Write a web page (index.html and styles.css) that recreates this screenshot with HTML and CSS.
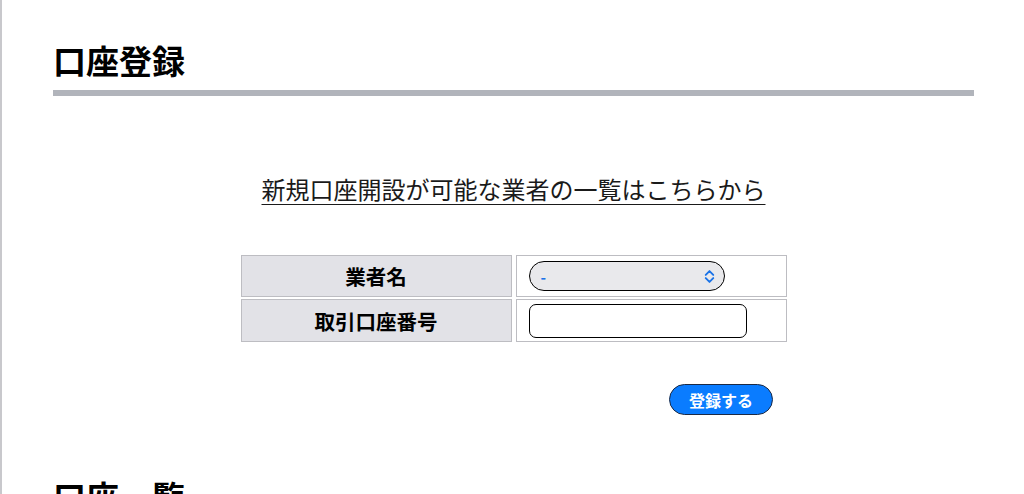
FILE: index.html
```html
<!DOCTYPE html>
<html lang="ja">
<head>
<meta charset="utf-8">
<link rel="stylesheet" href="styles.css">
</head>
<body>
<div class="page">
  <section class="section">
    <h1 class="title">口座登録</h1>
    <div class="rule"></div>
    <p class="lead"><a class="lead-link" href="#">新規口座開設が可能な業者の一覧はこちらから</a></p>
    <form class="form">
      <table class="form-table">
        <tr>
          <th class="label">業者名</th>
          <td class="field">
            <div class="select">
              <span class="select-value">-</span>
              <svg class="chev" width="11" height="15" viewBox="0 0 10 14"><path d="M1.5 5.5 L5 2 L8.5 5.5 M1.5 8.5 L5 12 L8.5 8.5" fill="none" stroke="#1a73e8" stroke-width="1.8" stroke-linecap="round" stroke-linejoin="round"/></svg>
            </div>
          </td>
        </tr>
        <tr>
          <th class="label label-2">取引口座番号</th>
          <td class="field field-2"><input class="text-input" type="text"></td>
        </tr>
      </table>
      <div class="actions">
        <button class="submit" type="button">登録する</button>
      </div>
    </form>
  </section>
  <section class="section">
    <h1 class="title title-next">口座一覧</h1>
  </section>
</div>
</body>
</html>
```
FILE: styles.css
```css
html, body {
  margin: 0;
  padding: 0;
  background: #fff;
  height: 100%;
  overflow: hidden;
}
body {
  font-family: "Noto Sans CJK JP", "Noto Sans", sans-serif;
  color: #000;
  border-left: 2px solid #c8c8cc;
}
.page {
  padding: 0 50px 0 51px;
}
.title {
  margin: 0;
  padding-top: 37px;
  font-size: 33px;
  font-weight: 700;
  line-height: 46px;
}
.rule {
  margin-top: 7px;
  height: 6px;
  background: #b1b4bb;
}
.lead {
  margin: 77px 0 0;
  text-align: center;
  font-size: 24px;
  line-height: 32px;
}
.lead-link {
  color: #1a1a1a;
  text-decoration: underline;
  text-underline-offset: 5px;
  text-decoration-thickness: 1px;
}
.form {
  margin-top: 48px;
}
.form-table {
  margin: 0 auto;
  border-spacing: 4px 2px;
}
.label {
  width: 269px;
  height: 40px;
  background: #e2e2e7;
  border: 1px solid #bdbdc2;
  font-size: 20.5px;
  font-weight: 700;
  text-align: center;
  padding: 0;
}
.label-2 {
  height: 41px;
}
.field {
  width: 257px;
  height: 40px;
  border: 1px solid #bdbdc2;
  padding: 0 0 0 12px;
}
.select {
  width: 196px;
  height: 30px;
  border: 1px solid #000;
  border-radius: 15px;
  background: #e9e9ec;
  display: flex;
  align-items: center;
  justify-content: space-between;
  padding: 0 9px 0 11px;
  box-sizing: border-box;
}
.select-value {
  color: #1a73e8;
  font-size: 15px;
  font-weight: 700;
}
.chev {
  display: block;
}
.text-input {
  display: block;
  width: 218px;
  height: 34px;
  box-sizing: border-box;
  border: 1px solid #000;
  border-radius: 7px;
  background: #fff;
  font-size: 14px;
}
.actions {
  display: flex;
  justify-content: center;
  margin-top: 40px;
  padding-left: 415px;
}
.submit {
  width: 104px;
  height: 31px;
  border: 1px solid #1c2a44;
  border-radius: 16px;
  background: #0a7cff;
  color: #fff;
  font-family: "Noto Sans CJK JP", sans-serif;
  font-size: 16px;
  font-weight: 700;
  padding: 0;
}
.title-next {
  padding-top: 58px;
}
```
